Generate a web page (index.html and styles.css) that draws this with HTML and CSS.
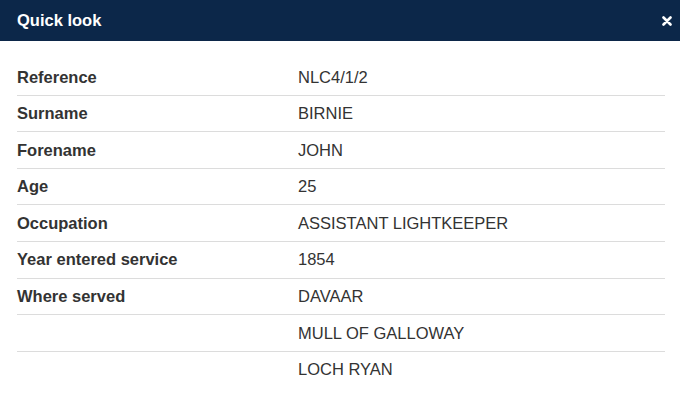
FILE: index.html
```html
<!DOCTYPE html>
<html>
<head>
<meta charset="utf-8">
<link rel="stylesheet" href="styles.css">
</head>
<body>
<div class="modal">
  <div class="modal-header">
    <span class="modal-title">Quick look</span>
    <svg class="close" width="10" height="10" viewBox="0 0 10 10"><path d="M1.5 1.5 L8.5 8.5 M8.5 1.5 L1.5 8.5" stroke="#fff" stroke-width="2.6" stroke-linecap="round"/></svg>
  </div>
  <div class="modal-body">
    <div class="row"><div class="label">Reference</div><div class="value">NLC4/1/2</div></div>
    <div class="row"><div class="label">Surname</div><div class="value">BIRNIE</div></div>
    <div class="row"><div class="label">Forename</div><div class="value">JOHN</div></div>
    <div class="row"><div class="label">Age</div><div class="value">25</div></div>
    <div class="row"><div class="label">Occupation</div><div class="value">ASSISTANT LIGHTKEEPER</div></div>
    <div class="row"><div class="label">Year entered service</div><div class="value">1854</div></div>
    <div class="row"><div class="label">Where served</div><div class="value">DAVAAR</div></div>
    <div class="row"><div class="label"></div><div class="value">MULL OF GALLOWAY</div></div>
    <div class="row last"><div class="label"></div><div class="value">LOCH RYAN</div></div>
  </div>
</div>
</body>
</html>
```
FILE: styles.css
```css
html, body {
  margin: 0;
  padding: 0;
  background: #fff;
}
body {
  font-family: "Liberation Sans", Arial, sans-serif;
  color: #333;
}
.modal {
  width: 680px;
  height: 410px;
  background: #fff;
}
.modal-header {
  height: 41px;
  background: #0c2749;
  display: flex;
  align-items: center;
  justify-content: space-between;
  padding: 0 8px 0 17px;
  box-sizing: border-box;
}
.modal-title {
  color: #fff;
  font-size: 16.5px;
  font-weight: bold;
}
.close {
  display: block;
}
.modal-body {
  padding: 18px 15px 0 17px;
}
.row {
  display: grid;
  grid-template-columns: 281px 1fr;
  padding: 8.5px 0 7.5px;
  line-height: 19.6px;
  font-size: 16.5px;
  border-bottom: 1px solid #dcdcdc;
}
.row.last {
  border-bottom: none;
}
.label {
  font-weight: bold;
  color: #333;
}
.value {
  color: #333;
}
```
